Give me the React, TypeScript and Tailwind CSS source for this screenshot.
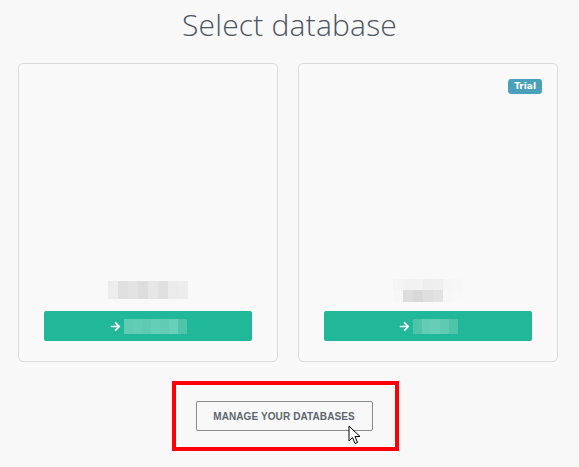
import React from 'react';
import { FaArrowRight } from 'react-icons/fa';

const Pixels = ({ cells, h, w = 'w-[10px]' }: { cells: string[]; h: string; w?: string }) => (
  <div className="flex">
    {cells.map((c, i) => (
      <div key={i} className={`${w} ${h}`} style={{ backgroundColor: c }} />
    ))}
  </div>
);

const DbCard = ({ trial, name, label }: { trial?: boolean; name: React.ReactNode; label: string[] }) => (
  <div className="relative flex h-[299px] w-[260px] flex-col justify-end rounded-[5px] border border-[#dcdcdc] bg-[#f9f9f9] px-[25px] pb-[20px]">
    {trial && (
      <span className="absolute right-[15px] top-[15px] rounded-[3px] bg-[#4aa0b8] px-[6px] py-[1px] text-[9px] font-bold leading-[13px] text-white [font-family:'DejaVu_Sans',sans-serif]">
        Trial
      </span>
    )}
    <div className="flex h-[22px] items-center justify-center">{name}</div>
    <button className="mt-[10px] flex h-[30px] w-full items-center justify-center gap-[3px] rounded-[2px] bg-[#20b898] text-white">
      <FaArrowRight className="h-[11px] w-[11px]" />
      <Pixels cells={label} h="h-[15px]" w="w-[9px]" />
    </button>
  </div>
);

export default function App() {
  return (
    <div className="relative h-[467px] w-[579px] overflow-hidden bg-[#f8f8f8] [font-family:'Liberation_Sans',Arial,sans-serif]">
      <h1 className="pt-[5px] text-center text-[30px] font-light leading-[40px] tracking-[0.2px] text-[#4b5560] [font-family:'Open_Sans',sans-serif]">
        Select database
      </h1>
      <div className="mt-[18px] flex gap-[20px] pl-[18px]">
        <DbCard
          name={
            <Pixels
              h="h-[18px]"
              cells={['#ededed', '#e0e0e0', '#e3e3e3', '#dddddd', '#e6e6e6', '#e0e0e0', '#ebebeb', '#ececec']}
            />
          }
          label={['#5ecbb2', '#63ccb4', '#5fcab1', '#66cdb6', '#62cbb4', '#6acfb8', '#4fc4a9']}
        />
        <DbCard
          trial
          name={
            <div className="flex flex-col items-center">
              <Pixels h="h-[11px]" cells={['#f5f5f5', '#f2f2f2', '#f2f2f2', '#eeeeee', '#efefef', '#f6f6f6', '#f7f7f7']} />
              <Pixels h="h-[12px]" cells={['#f7f7f7', '#dddddd', '#d9d9d9', '#dfdfdf', '#e2e2e2', '#f7f7f7', '#f8f8f8']} />
            </div>
          }
          label={['#4fc4a9', '#63ccb4', '#66cdb6', '#5fcab1', '#4fc4a9']}
        />
      </div>
      <div className="mt-[19px] flex justify-center pr-[9px]">
        <div className="border-[4px] border-[#ff0000] pb-[16px] pl-[20px] pr-[22px] pt-[16px]">
          <button className="h-[30px] w-[177px] rounded-[2px] border border-[#8a8a8a] bg-[#f8f8f8] text-[10px] font-bold tracking-[0.1px] text-[#5c6670]">
            MANAGE YOUR DATABASES
          </button>
        </div>
      </div>
      <svg className="absolute left-[348px] top-[425px]" width="13" height="20" viewBox="0 0 13 20">
        <path d="M1 1 L1 16 L4.5 12.5 L7 18.5 L9.5 17.5 L7 11.5 L12 11.5 Z" fill="#fff" stroke="#000" strokeWidth="1" strokeLinejoin="round" />
      </svg>
    </div>
  );
}
